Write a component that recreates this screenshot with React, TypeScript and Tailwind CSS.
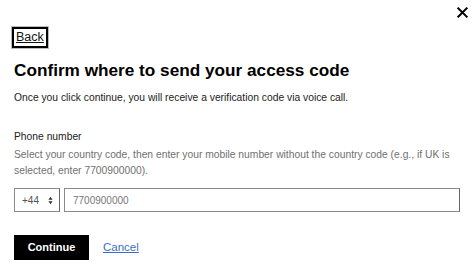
import { useState } from "react";

export default function App() {
  const [phone, setPhone] = useState("");

  return (
    <div
      className="relative w-[475px] h-[274px] bg-white text-[#111] px-[14px] pt-[27px]"
      style={{ fontFamily: '"Liberation Sans", Arial, sans-serif' }}
    >
      {/* Close */}
      <button className="absolute right-[7px] top-[6px] w-[12px] h-[12px] flex items-center justify-center" aria-label="Close">
        <svg viewBox="0 0 12 12" className="w-[11px] h-[11px]">
          <path d="M1.5 1.5 L10.5 10.5 M10.5 1.5 L1.5 10.5" stroke="#000" strokeWidth="2.2" strokeLinecap="square" />
        </svg>
      </button>

      <div className="flex">
        <button className="h-[21px] px-[2px] border-2 border-black outline outline-1 outline-[#bbb] text-[12.5px] leading-none underline text-[#111] ml-[-2px]">
          Back
        </button>
      </div>

      <h1 className="mt-[12px] text-[17.2px] leading-[20px] font-bold text-black">
        Confirm where to send your access code
      </h1>

      <p className="mt-[11px] text-[10.3px] leading-[14px] text-[#222]">
        Once you click continue, you will receive a verification code via voice call.
      </p>

      <label className="block mt-[25px] text-[10.3px] leading-[14px] text-[#222]">Phone number</label>
      <p className="mt-[3px] text-[10.3px] leading-[16px] text-[#707070]">
        Select your country code, then enter your mobile number without the country code (e.g., if UK is
        selected, enter 7700900000).
      </p>

      <div className="mt-[9px] flex gap-[4px] h-[24px] w-[446px]">
        <div className="w-[46px] h-full border border-[#8a8a8a] border-r-[#666] flex items-center justify-between pl-[7px] pr-[6px] text-[10px] text-[#555]">
          <span>+44</span>
          <svg viewBox="0 0 6 10" className="w-[5px] h-[9px]">
            <path d="M3 0.5 L5.5 4 H0.5 Z M3 9.5 L0.5 6 H5.5 Z" fill="#333" />
          </svg>
        </div>
        <input
          value={phone}
          onChange={(e) => setPhone(e.target.value)}
          placeholder="7700900000"
          className="flex-1 h-full border border-[#8a8a8a] border-r-[#666] px-[8px] text-[10px] text-[#333] placeholder:text-[#777] outline-none"
        />
      </div>

      <div className="mt-[23px] flex items-center gap-[14px]">
        <button className="w-[75px] h-[25px] bg-black text-white text-[11px] font-bold">Continue</button>
        <a href="#" className="text-[11.5px] text-[#3a6fc4] underline">Cancel</a>
      </div>
    </div>
  );
}
